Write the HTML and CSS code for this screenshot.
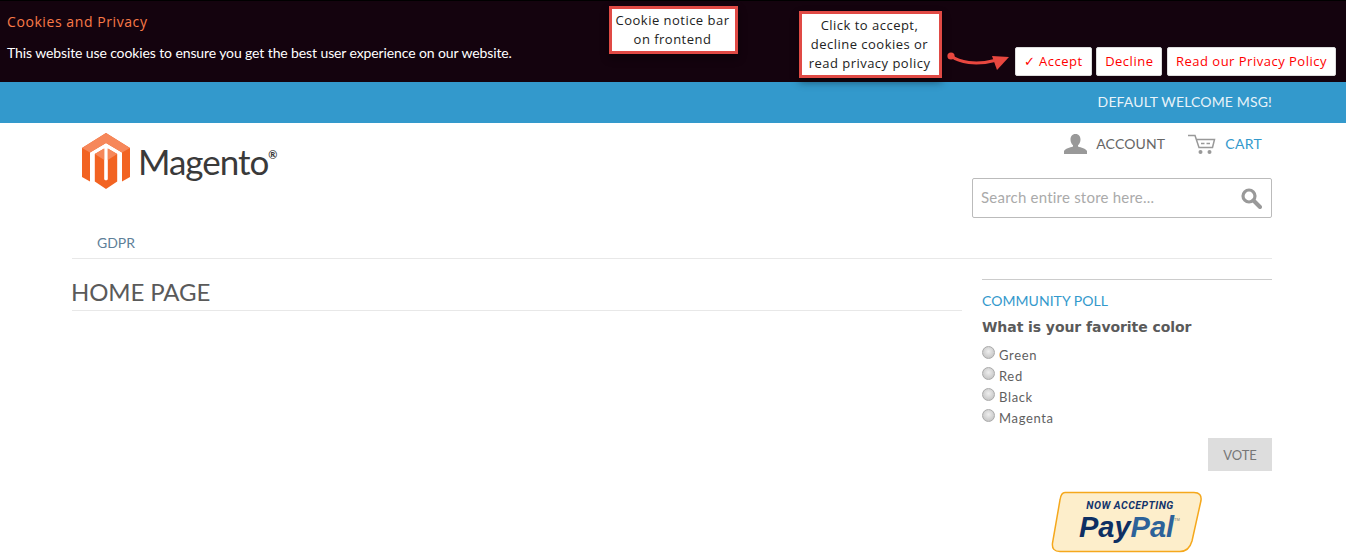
FILE: index.html
```html
<!DOCTYPE html>
<html lang="en">
<head>
<meta charset="utf-8">
<title>Home Page</title>
<link rel="stylesheet" href="styles.css">
</head>
<body>
<section class="cookie-bar">
  <div class="cookie-text">
    <h2 class="cookie-title">Cookies and Privacy</h2>
    <p class="cookie-msg">This website use cookies to ensure you get the best user experience on our website.</p>
  </div>
  <div class="cookie-actions">
    <button class="cookie-btn">✓ Accept</button>
    <button class="cookie-btn">Decline</button>
    <button class="cookie-btn">Read our Privacy Policy</button>
  </div>
  <div class="note note-bar">Cookie notice bar<br>on frontend</div>
  <div class="note note-click">Click to accept,<br>decline cookies or<br>read privacy policy</div>
  <svg class="arrow" width="70" height="24" viewBox="0 0 70 24">
    <circle cx="4" cy="5" r="3.600" fill="#e8473f"/>
    <path d="M4 5C12 11 28 15 50 9" fill="none" stroke="#e8473f" stroke-width="3" stroke-linecap="round"/>
    <path d="M45 5L62 6L50 19Z" fill="#e8473f"/>
  </svg>
</section>
<div class="welcome">DEFAULT WELCOME MSG!</div>
<div class="page">
  <header class="header">
    <a class="logo">
      <svg width="48" height="56" viewBox="0 0 48 56">
        <path fill="#f26322" d="M24 0L48 15V44L40 48.500V19.500L24 10L8 19.500V48.500L0 44V15Z"/>
        <path fill="#f26322" d="M12.800 21L22.200 15.500V46.500L24 47.500L25.800 46.500V15.500L35.200 21V48.500L24 56L12.800 48.500Z"/>
        <path fill="#f6875a" d="M24 0L48 15L40 19.500L24 10L8 19.500L0 15Z"/>
        <path fill="#f6875a" d="M12.800 21L22.200 15.500V27ZM35.200 21L25.800 15.500V27Z"/>
      </svg>
      <span class="logo-word">Magento<sup class="logo-mark">®</sup></span>
    </a>
    <div class="header-right">
      <div class="links">
        <a class="link link-account">
          <svg width="23" height="20" viewBox="0 0 23 20"><path fill="#999" d="M11.500 0C15 0 16.500 2.500 16.500 5.500C16.500 8 15.500 10 14 11.200V12.500C17 13.500 22 14.500 23 17V20H0V17C1 14.500 6 13.500 9 12.500V11.200C7.500 10 6.500 8 6.500 5.500C6.500 2.500 8 0 11.500 0Z"/></svg>
          ACCOUNT
        </a>
        <a class="link link-cart">
          <svg width="28" height="21" viewBox="0 0 28 21"><path fill="none" stroke="#999" stroke-width="1.500" d="M0 1.500H7L11 13.500H24.500L26.500 5.500H8.500"/><path stroke="#999" stroke-width="1.600" d="M13 9.500H16.500M18.500 9.500H22"/><circle cx="12.500" cy="18" r="2" fill="#999"/><circle cx="21.500" cy="18" r="2" fill="#999"/></svg>
          CART
        </a>
      </div>
      <div class="search">
        <span class="search-ph">Search entire store here...</span>
        <svg width="21" height="21" viewBox="0 0 21 21"><circle cx="8" cy="8" r="6" fill="none" stroke="#999" stroke-width="3.200"/><path d="M12.500 12.500L19 19" stroke="#999" stroke-width="4" stroke-linecap="round"/></svg>
      </div>
    </div>
  </header>
  <nav class="nav"><a class="nav-link">GDPR</a></nav>
  <main class="main">
    <div class="content"><h1 class="page-title">HOME PAGE</h1></div>
    <aside class="sidebar">
      <h3 class="poll-title">COMMUNITY POLL</h3>
      <p class="poll-q">What is your favorite color</p>
      <ul class="poll-list">
        <li class="poll-item"><span class="radio"></span>Green</li>
        <li class="poll-item"><span class="radio"></span>Red</li>
        <li class="poll-item"><span class="radio"></span>Black</li>
        <li class="poll-item"><span class="radio"></span>Magenta</li>
      </ul>
      <div class="vote-row"><button class="vote">VOTE</button></div>
      <svg class="paypal" width="152" height="62" viewBox="0 0 152 62">
        <path d="M14 1.500H143Q151 1.500 150 9.500L141 50Q138 60.500 129 60.500H9Q0.500 60.500 1.500 52L9 9Q10 1.500 14 1.500Z" fill="#fdeecb" stroke="#f5a81c" stroke-width="1.500"/>
        <text class="pp-now" x="79" y="18" text-anchor="middle">NOW ACCEPTING</text>
        <text class="pp-word" x="28" y="46"><tspan fill="#0e2f63">Pay</tspan><tspan fill="#2d6299">Pal</tspan></text>
        <text class="pp-tm" x="123" y="30">TM</text>
      </svg>
    </aside>
  </main>
</div>
</body>
</html>
```
FILE: styles.css
```css
* { box-sizing: border-box; }
html, body { margin: 0; padding: 0; }
body { font-family: "Lato", "Liberation Sans", sans-serif; color: #555; background: #fff; height: 554px; overflow: hidden; }
h1, h2, h3, p, ul { margin: 0; padding: 0; }
ul { list-style: none; }

.cookie-bar { position: relative; height: 82px; background: #14030e; border-top: 1px solid #000; display: flex; justify-content: space-between; padding: 0 10px 6px 7px; align-items: flex-end; }
.cookie-text { align-self: flex-start; }
.cookie-title { font-family: "Open Sans", sans-serif; font-weight: 400; font-size: 14px; line-height: 20px; color: #f97a48; margin-top: 11px; letter-spacing: 0.58px; }
.cookie-msg { font-size: 14px; line-height: 20px; color: #fff; margin-top: 11px; letter-spacing: -0.11px; }
.cookie-actions { display: flex; gap: 4.500px; }
.cookie-btn { font-family: "Open Sans", sans-serif; font-size: 13px; line-height: 17px; color: #f00; background: #fff; border: 1px solid #ddd; border-radius: 2px; height: 29px; padding: 0 8px 1px; letter-spacing: 0.5px; }

.note { position: absolute; background: #fff; border: 3px solid #e04a45; color: #222; font-family: "Open Sans", sans-serif; font-size: 13px; line-height: 19px; letter-spacing: 0.48px; text-align: center; box-shadow: 0 4px 8px rgba(0,0,0,.45); }
.note-bar { left: 609px; top: 5px; width: 129px; height: 48px; padding: 2px 2px 0 0; }
.note-click { left: 799px; top: 10px; width: 143px; height: 67px; padding: 2px 2px 0 0; }
.arrow { position: absolute; left: 947px; top: 50px; }

.welcome { height: 41px; background: #3399cc; color: #e8f3f9; font-size: 14px; line-height: 40px; text-align: right; padding-right: 74px; letter-spacing: 0.15px; }

.page { width: 1200px; margin-left: 72px; }
.header { height: 108px; display: flex; justify-content: space-between; align-items: flex-start; }
.logo { display: flex; align-items: center; margin: 10px 0 0 10px; gap: 8px; }
.logo-word { font-family: "Lato", sans-serif; font-size: 35px; line-height: 56px; color: #3a3a3a; letter-spacing: -1px; }
.logo-mark { font-size: 11px; font-weight: 700; vertical-align: 16px; line-height: 0; letter-spacing: 0; }
.header-right { width: 300px; }
.links { display: flex; justify-content: flex-end; gap: 23px; padding: 11px 10px 0 0; height: 55px; }
.link { display: flex; align-items: flex-start; gap: 9px; font-size: 14px; line-height: 20px; color: #666; letter-spacing: 0.15px; }
.link-cart { color: #3399cc; letter-spacing: 0.3px; }
.search { height: 40px; border: 1px solid #bbb; border-radius: 2px; display: flex; justify-content: space-between; align-items: center; padding: 0 9px 0 8px; }
.search-ph { font-size: 15px; line-height: 18px; margin-bottom: 2px; color: #aaa; letter-spacing: 0.22px; }

.nav { height: 28px; border-bottom: 1px solid #e8e8e8; padding-left: 25px; }
.nav-link { font-size: 14px; line-height: 24px; color: #5e7f99; }

.main { display: flex; justify-content: space-between; }
.content { width: 890px; }
.page-title { margin-top: 19px; height: 33px; border-bottom: 1px solid #e8e8e8; font-size: 24px; line-height: 28px; font-weight: 400; color: #5a5a5a; letter-spacing: -0.12px; text-indent: -1px; }
.sidebar { width: 290px; margin-top: 20px; border-top: 1px solid #ccc; }
.poll-title { font-size: 14px; font-weight: 400; line-height: 20px; color: #3399cc; margin-top: 11px; letter-spacing: 0.05px; }
.poll-q { font-family: "DejaVu Sans", sans-serif; font-weight: 700; font-size: 14px; line-height: 20px; color: #5a5a5a; margin-top: 6px; letter-spacing: -0.07px; }
.poll-list { margin-top: 8px; }
.poll-item { display: flex; align-items: flex-start; height: 21px; font-size: 13px; line-height: 21px; color: #5f5f5f; letter-spacing: 0.65px; }
.radio { width: 13px; height: 13px; border-radius: 50%; margin: 1px 4px 0 0; border: 1px solid #aaa; background: radial-gradient(circle at 50% 40%, #eee, #bbb); }
.vote-row { display: flex; justify-content: flex-end; margin-top: 9px; }
.vote { width: 64px; height: 33px; background: #ddd; border: 0; color: #777; font-family: "Lato", sans-serif; font-size: 13px; }
.paypal { display: block; margin: 20px 0 0 69px; }
.pp-now { font-family: "Roboto", sans-serif; font-weight: 700; font-style: italic; font-size: 10.500px; letter-spacing: .45px; fill: #12346b; }
.pp-word { font-family: "Liberation Sans", sans-serif; font-weight: 700; font-style: italic; font-size: 29px; }
.pp-tm { font-family: "Liberation Sans", sans-serif; font-size: 4px; fill: #777; }
```
